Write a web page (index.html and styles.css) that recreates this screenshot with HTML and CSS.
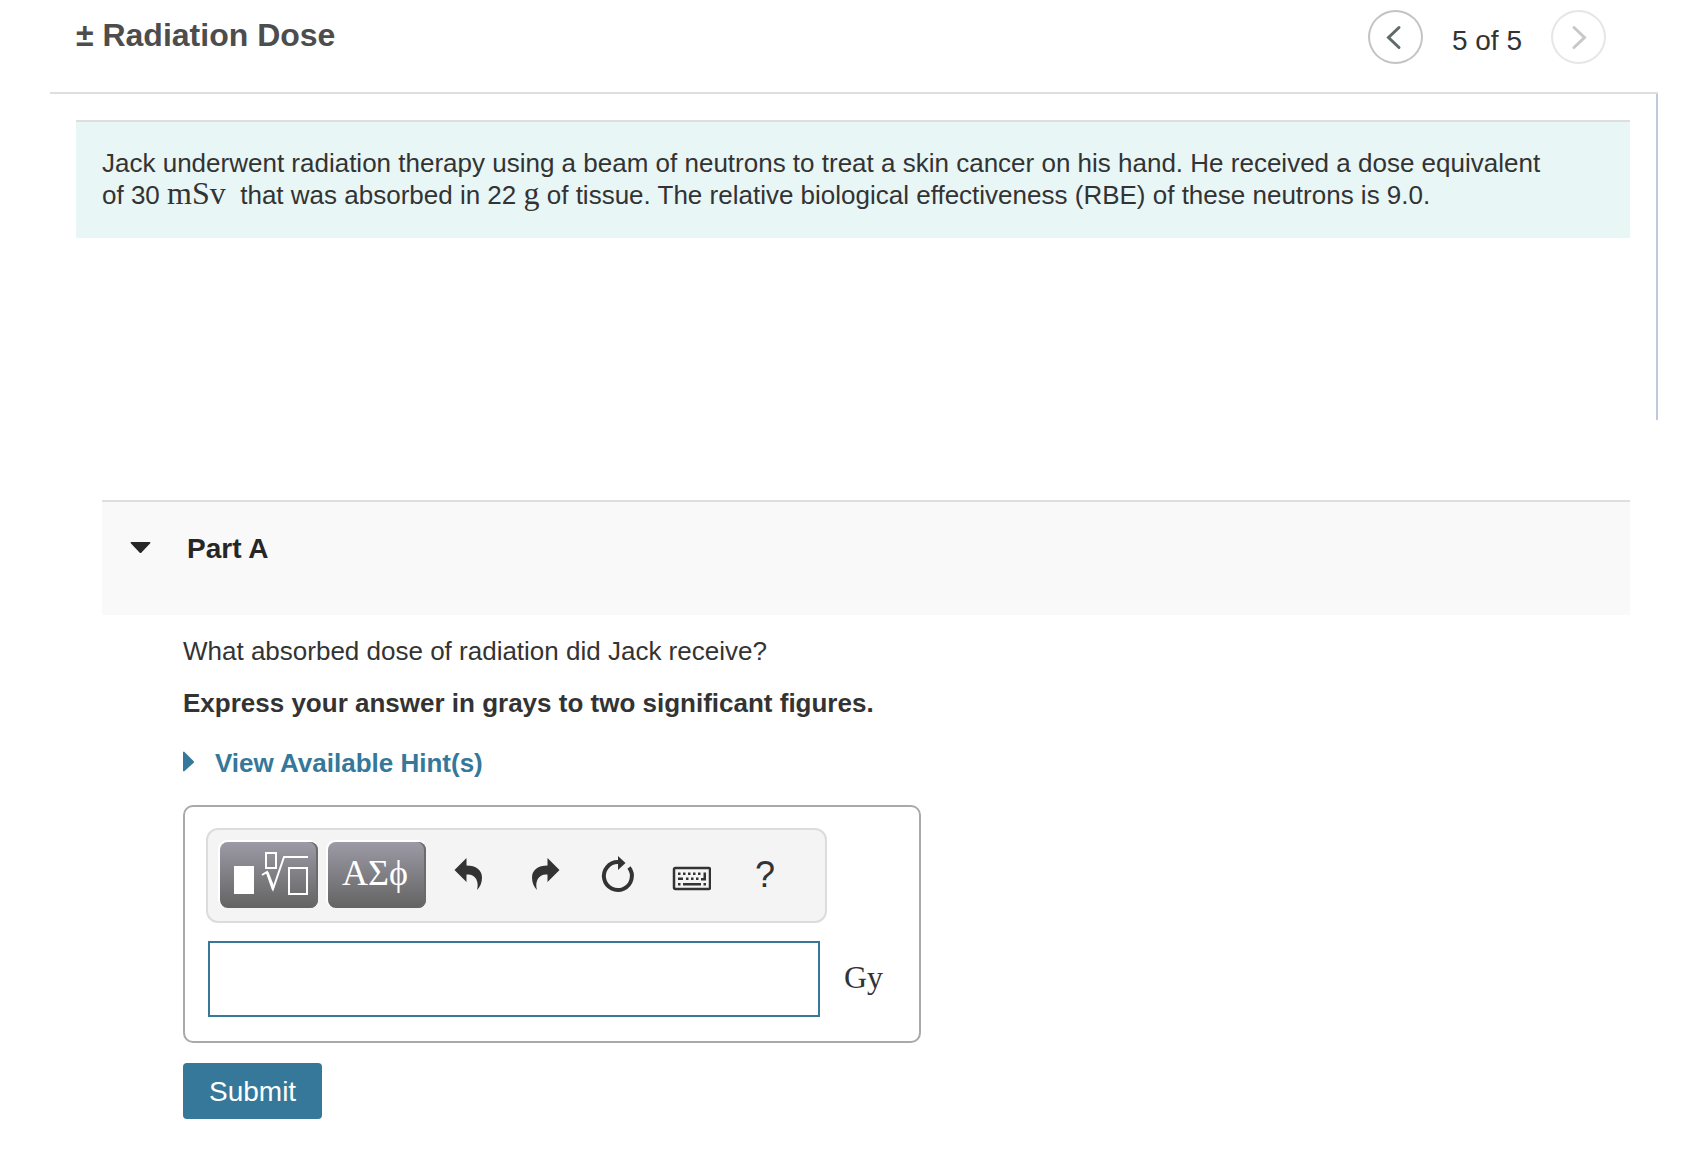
FILE: index.html
```html
<!DOCTYPE html>
<html lang="en">
<head>
    <meta charset="UTF-8">
    <meta name="viewport" content="width=device-width, initial-scale=1.0">
    <title>Radiation Dose</title>
    <link rel="stylesheet" href="styles.css">
</head>
<body>
    <div class="page">
        <header class="item-header">
            <h1>± Radiation Dose</h1>
            <nav class="pager">
                <button type="button" class="pager-btn" aria-label="Previous item">
                    <svg width="54" height="54" viewBox="0 0 54 54"><path d="M31 17.500L20.500 27.500L31 37.500"/></svg>
                </button>
                <span class="pager-text">5 of 5</span>
                <button type="button" class="pager-btn" aria-label="Next item" disabled>
                    <svg width="54" height="54" viewBox="0 0 54 54"><path d="M23 17.500L33.500 27.500L23 37.500"/></svg>
                </button>
            </nav>
        </header>

        <section class="intro-wrapper">
            <p class="intro">Jack underwent radiation therapy using a beam of neutrons to treat a skin cancer on his hand. He received a dose equivalent of&nbsp;30&nbsp;<span class="unit">mSv</span>&nbsp; that was absorbed in 22 <span class="unit">g</span> of tissue. The relative biological effectiveness (RBE) of these neutrons is 9.0.</p>
        </section>

        <section class="part">
            <h2>
                <button type="button" class="part-toggle" aria-expanded="true">
                    <svg width="22" height="14" viewBox="0 0 22 14"><path d="M1 0H20Q21 0.500 20 1.500L11.500 10.500Q10.500 11.500 9.500 10.500L1 1.500Q0 0.500 1 0Z"/></svg>
                    Part A
                </button>
            </h2>
            <form class="part-body">
                <label class="question" for="answer">What absorbed dose of radiation did Jack receive?</label>
                <p class="instructions">Express your answer in grays to two significant figures.</p>
                <a class="hints" href="#hints">
                    <svg width="12" height="24" viewBox="0 0 12 24"><path d="M0 1L1 0.500L10.500 10Q11.500 11 10.500 12L1 20.500L0 20Z"/></svg>
                    View Available Hint(s)
                </a>

                <div class="answer-box">
                    <div class="toolbar">
                        <button type="button" class="palette-btn" aria-label="Templates">
                            <svg width="98" height="66" viewBox="0 0 98 66">
                                <rect x="14" y="24" width="20" height="28" fill="#fff"/>
                                <g fill="none" stroke="#fff" stroke-width="2">
                                    <rect x="46" y="11" width="10" height="15"/>
                                    <rect x="69" y="26" width="18" height="26"/>
                                    <path d="M42 33L47 30L53 47L64 15H88"/>
                                </g>
                                <path d="M46 31L48.500 30L54.500 45L53 48H52Z" fill="#fff"/>
                            </svg>
                        </button>
                        <button type="button" class="palette-btn greek">ΑΣϕ</button>
                        <button type="button" class="tool-btn" aria-label="Undo">
                            <svg width="40" height="40" viewBox="0 0 40 40"><path d="M5.500 15L17.500 3V10.500C27 10.500 33 15 33 22.500C33 28 31 32 28 35C30.500 26 26 18.500 17.500 19.500V27Z"/></svg>
                        </button>
                        <button type="button" class="tool-btn" aria-label="Redo">
                            <svg width="40" height="40" viewBox="0 0 40 40"><path d="M36.500 15L24.500 3V10.500C15 10.500 9 15 9 22.500C9 28 11 32 14 35C11.500 26 16 18.500 24.500 19.500V27Z"/></svg>
                        </button>
                        <button type="button" class="tool-btn" aria-label="Reset">
                            <svg width="40" height="40" viewBox="0 0 40 40">
                                <path d="M21 7A14 14 0 1 0 32 12.500" fill="none" stroke="#333" stroke-width="4"/>
                                <path d="M21 1L28.500 8L21 15Z"/>
                            </svg>
                        </button>
                        <button type="button" class="tool-btn" aria-label="Keyboard shortcuts">
                            <svg width="40" height="40" viewBox="0 0 40 40">
                                <rect x="3" y="13" width="36" height="21" rx="1.500" fill="none" stroke="#333" stroke-width="2.500"/>
                                <path d="M7 17.500h2.500v2.500H7ZM12 17.500h2.500v2.500H12ZM17 17.500h2.500v2.500H17ZM22 17.500h2.500v2.500H22ZM27 17.500h2.500v2.500H27ZM32.500 17.500h2.500v8h-5v-2.500h2.500ZM7 22.500h5v2.500H7ZM15 22.500h2.500v2.500H15ZM20 22.500h2.500v2.500H20ZM25 22.500h2.500v2.500H25ZM7 28h2.500v2.500H7ZM12 28h18v2.500H12ZM32.500 28h2.500v2.500h-2.500Z"/>
                            </svg>
                        </button>
                        <button type="button" class="tool-btn help">?</button>
                    </div>
                    <div class="answer-row">
                        <input type="text" id="answer" autocomplete="off">
                        <span class="answer-unit">Gy</span>
                    </div>
                </div>

                <button type="submit" class="submit-btn">Submit</button>
            </form>
        </section>
    </div>
</body>
</html>
```
FILE: styles.css
```css
body {
    margin: 0;
    background: #fff;
    color: #333;
    font-family: "Liberation Sans", Arial, sans-serif;
    font-size: 26px;
    line-height: 32px;
}
h1, h2, p {
    margin: 0;
}
button {
    padding: 0;
    border: none;
    background: none;
    color: inherit;
    font-family: inherit;
    cursor: pointer;
}
svg {
    display: block;
    fill: #333;
}
.page {
    padding: 0 23px 0 50px;
}

/* header */
.item-header {
    display: flex;
    justify-content: space-between;
    align-items: flex-start;
    height: 82px;
    padding: 10px 52px 0 26px;
    border-bottom: 2px solid #dedede;
}
h1 {
    padding-top: 6px;
    color: #4d4d4d;
    font-size: 32px;
    line-height: 38px;
}
.pager {
    display: flex;
    align-items: flex-start;
    gap: 29px;
}
.pager-btn {
    box-sizing: border-box;
    width: 55px;
    height: 54px;
    border: 2px solid #c4c4c4;
    border-radius: 50%;
}
.pager-btn svg {
    margin: -2px;
    fill: none;
    stroke: #5f6b6b;
    stroke-width: 3;
    stroke-linecap: round;
    stroke-linejoin: miter;
}
.pager-btn:disabled {
    border-color: #e6e6e6;
    cursor: default;
}
.pager-btn:disabled svg {
    stroke: #c8c8c8;
}
.pager-text {
    padding-top: 15px;
    font-size: 28px;
}

/* problem statement */
.intro-wrapper {
    box-sizing: border-box;
    min-height: 326px;
    padding: 26px 26px 0;
    border-right: 2px solid #bccadb;
}
.intro {
    padding: 25px 52px 27px 26px;
    border-top: 2px solid #dedede;
    background: #e8f6f6;
}
.unit, .answer-unit {
    font-family: "Liberation Serif", "Times New Roman", serif;
    font-size: 32px;
    line-height: 24px;
}

/* part */
.part {
    margin: 80px 28px 0 52px;
}
.part h2 {
    height: 84px;
    padding: 29px 28px 0;
    border-top: 2px solid #dedede;
    background: #f9f9f9;
}
.part-toggle {
    display: flex;
    align-items: center;
    gap: 35px;
    color: #262626;
    font-size: 28px;
    font-weight: bold;
    line-height: 36px;
}
.part-toggle svg {
    fill: #262626;
}
.part-body {
    display: flex;
    flex-direction: column;
    align-items: flex-start;
    padding: 20px 0 32px 81px;
}
.instructions {
    margin-top: 20px;
    font-weight: bold;
}
.hints {
    display: flex;
    align-items: center;
    gap: 20px;
    margin-top: 28px;
    color: #357899;
    font-weight: bold;
    text-decoration: none;
}
.hints svg {
    fill: #357899;
}
.answer-box {
    margin-top: 26px;
    padding: 21px 36px 24px 21px;
    border: 2px solid #a9a9a9;
    border-radius: 10px;
}
.toolbar {
    display: flex;
    width: 593px;
    padding: 12px;
    border: 2px solid #dcdcdc;
    border-radius: 12px;
    background: #f4f4f4;
    height: 67px;
}
.palette-btn {
    width: 98px;
    height: 66px;
    margin-right: 10px;
    border-radius: 8px;
    background: linear-gradient(#9c9aa5, #636363);
    box-shadow: -1px -1px 0 1px #fff, inset -2px 0 0 #6b6b6b;
    color: #fff;
}
.greek {
    margin-right: 6px;
    padding: 0 4px 5px 0;
    font-family: "Liberation Serif", "Times New Roman", serif;
    font-size: 36px;
}
.tool-btn {
    display: flex;
    justify-content: center;
    align-items: center;
    width: 74px;
    height: 66px;
}
.help {
    font-size: 36px;
}
.answer-row {
    display: flex;
    align-items: center;
    gap: 24px;
    margin: 18px 0 0 2px;
}
.answer-row input {
    box-sizing: border-box;
    width: 612px;
    height: 76px;
    padding: 0 12px;
    border: 2px solid #357899;
    background: #fff;
    color: #333;
    font-family: "Liberation Serif", "Times New Roman", serif;
    font-size: 32px;
    outline: none;
}
.answer-unit {
    padding-bottom: 4px;
}
.submit-btn {
    height: 56px;
    margin-top: 20px;
    padding: 1px 26px 0;
    border-radius: 4px;
    background: #357899;
    color: #fff;
    font-size: 28px;
}
```
